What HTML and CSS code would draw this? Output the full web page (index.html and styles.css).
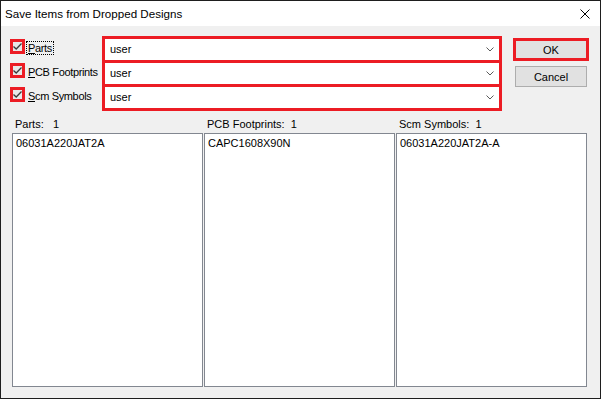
FILE: index.html
```html
<!DOCTYPE html>
<html lang="en">
  <head>
    <meta charset="UTF-8" />
    <meta name="viewport" content="width=device-width, initial-scale=1.0" />
    <title>Save Items from Dropped Designs</title>
    <link rel="stylesheet" href="styles.css">
  </head>
  <body>
    <div class="window">
      <div class="titlebar">
        <span class="title">Save Items from Dropped Designs</span>
        <svg class="close" width="10" height="10" viewBox="0 0 10 10">
          <path d="M0.5 0.5L9.5 9.5M9.5 0.5L0.5 9.5" stroke="#000" stroke-width="1" fill="none" />
        </svg>
      </div>
      <div class="content">
        <div class="top">
          <div class="checks">
            <div class="check-row">
              <span class="box"><svg width="9" height="9" viewBox="0 0 9 9"><polyline points="0.5,4.5 3.2,7 8.5,1.5" /></svg></span>
              <span class="label focus"><u>P</u>arts</span>
            </div>
            <div class="check-row">
              <span class="box"><svg width="9" height="9" viewBox="0 0 9 9"><polyline points="0.5,4.5 3.2,7 8.5,1.5" /></svg></span>
              <span class="label"><u>P</u>CB Footprints</span>
            </div>
            <div class="check-row">
              <span class="box"><svg width="9" height="9" viewBox="0 0 9 9"><polyline points="0.5,4.5 3.2,7 8.5,1.5" /></svg></span>
              <span class="label"><u>S</u>cm Symbols</span>
            </div>
          </div>
          <div class="combos">
            <div class="combo"><span>user</span><svg width="8" height="5" viewBox="0 0 8 5"><polyline points="0.5,0.5 4,4 7.5,0.5" /></svg></div>
            <div class="combo"><span>user</span><svg width="8" height="5" viewBox="0 0 8 5"><polyline points="0.5,0.5 4,4 7.5,0.5" /></svg></div>
            <div class="combo"><span>user</span><svg width="8" height="5" viewBox="0 0 8 5"><polyline points="0.5,0.5 4,4 7.5,0.5" /></svg></div>
          </div>
          <div class="buttons">
            <button class="btn ok">OK</button>
            <button class="btn cancel">Cancel</button>
          </div>
        </div>
        <div class="lists">
          <div class="col">
            <div class="col-head">Parts:&nbsp;&nbsp; 1</div>
            <div class="listbox">06031A220JAT2A</div>
          </div>
          <div class="col">
            <div class="col-head">PCB Footprints:&nbsp; 1</div>
            <div class="listbox">CAPC1608X90N</div>
          </div>
          <div class="col">
            <div class="col-head">Scm Symbols:&nbsp; 1</div>
            <div class="listbox">06031A220JAT2A-A</div>
          </div>
        </div>
      </div>
    </div>
  </body>
</html>
```

FILE: styles.css
```css
* {
  margin: 0;
  padding: 0;
  box-sizing: border-box;
}
body {
  background: #f0f0f0;
  font-family: "Liberation Sans", Arial, sans-serif;
  font-size: 11px;
  color: #000;
}
.window {
  width: 601px;
  height: 399px;
  border: 1px solid #1e1e1e;
  background: #f0f0f0;
  display: flex;
  flex-direction: column;
}
.titlebar {
  height: 25px;
  background: #fff;
  display: flex;
  align-items: center;
  justify-content: space-between;
  padding: 0 10px 0 4px;
}
.title {
  font-size: 11.6px;
}
.content {
  flex: 1;
  padding: 10px 0 0 9px;
}
.top {
  display: flex;
  align-items: flex-start;
}
.checks {
  width: 92px;
}
.check-row {
  height: 24px;
  display: flex;
  align-items: flex-start;
}
.box {
  width: 15px;
  height: 15px;
  margin-top: 3px;
  border: 3px solid #ec1c24;
  background: #e8e8e8;
  display: flex;
}
.box polyline {
  fill: none;
  stroke: #3c3c3c;
  stroke-width: 1.3;
}
.label {
  margin: 5px 0 0 1px;
  padding: 0 1px;
  line-height: 12px;
  letter-spacing: -0.35px;
  border: 1px dotted transparent;
  white-space: nowrap;
}
.label.focus {
  border-color: #000;
}
.combos {
  width: 400px;
}
.combo {
  height: 27px;
  border: 3px solid #ec1c24;
  background: #fff;
  display: flex;
  align-items: center;
  justify-content: space-between;
  padding: 0 5px 1px 5px;
}
.combo + .combo {
  margin-top: -3px;
}
.combo polyline {
  fill: none;
  stroke: #5a5a5a;
  stroke-width: 1;
}
.buttons {
  width: 76px;
  margin-left: 11px;
  display: flex;
  flex-direction: column;
  align-items: center;
}
.btn {
  font-family: inherit;
  font-size: 11px;
  color: #000;
  background: #e1e1e1;
  border: 1px solid #adadad;
}
.ok {
  width: 76px;
  height: 23px;
  margin-top: 2px;
  border: 3px solid #ec1c24;
}
.cancel {
  width: 72px;
  height: 21px;
  margin-top: 5px;
}
.lists {
  margin: 7px 0 0 2px;
  display: grid;
  grid-template-columns: repeat(3, 191px);
  column-gap: 1px;
}
.col-head {
  height: 15px;
  line-height: 13px;
  padding-left: 3px;
}
.listbox {
  height: 254px;
  background: #fff;
  border: 1px solid #828790;
  padding: 3px 3px 0;
  line-height: 13px;
}
```
